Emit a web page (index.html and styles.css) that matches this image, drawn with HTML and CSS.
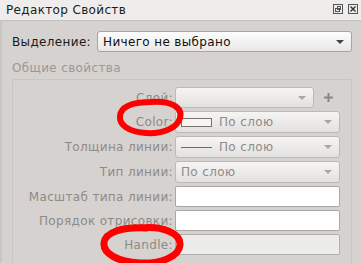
FILE: index.html
```html
<!DOCTYPE html>
<html lang="ru">
<head>
    <meta charset="UTF-8">
    <title>Редактор Свойств</title>
    <link rel="stylesheet" href="styles.css">
</head>
<body>
<div class="dock">
    <div class="titlebar">
        <span class="title">Редактор Свойств</span>
        <div class="title-buttons">
            <svg class="tb-icon" width="10" height="10" viewBox="0 0 10 10">
                <rect x="0.5" y="0.5" width="9" height="9" fill="none" stroke="#555"/>
                <rect x="2.5" y="4.5" width="4" height="3" fill="none" stroke="#555"/>
                <rect x="4.5" y="2.5" width="3" height="3" fill="none" stroke="#555"/>
            </svg>
            <svg class="tb-icon" width="10" height="10" viewBox="0 0 10 10">
                <rect x="0.5" y="0.5" width="9" height="9" fill="none" stroke="#555"/>
                <path d="M2.5 2.5 L7.5 7.5 M7.5 2.5 L2.5 7.5" stroke="#333" stroke-width="1.4"/>
            </svg>
        </div>
    </div>

    <div class="content">
        <div class="select-row">
            <span class="label-dark">Выделение:</span>
            <div class="combo combo-main">
                <span>Ничего не выбрано</span>
                <span class="arrow dark"></span>
            </div>
        </div>

        <div class="section-title">Общие свойства</div>

        <div class="group">
            <div class="prop-row">
                <span class="prop-label">Слой:</span>
                <div class="field-wrap">
                    <div class="combo combo-off short"><span></span><span class="arrow"></span></div>
                    <svg class="plus" width="11" height="11" viewBox="0 0 11 11">
                        <path d="M5.5 1 V10 M1 5.5 H10" stroke="#8a8683" stroke-width="2"/>
                    </svg>
                </div>
            </div>
            <div class="prop-row">
                <span class="prop-label">Color:</span>
                <div class="combo combo-off">
                    <span class="value"><span class="swatch"></span>По слою</span>
                    <span class="arrow"></span>
                </div>
            </div>
            <div class="prop-row">
                <span class="prop-label">Толщина линии:</span>
                <div class="combo combo-off">
                    <span class="value"><span class="line-sample"></span>По слою</span>
                    <span class="arrow"></span>
                </div>
            </div>
            <div class="prop-row">
                <span class="prop-label">Тип линии:</span>
                <div class="combo combo-off">
                    <span class="value">По слою</span>
                    <span class="arrow"></span>
                </div>
            </div>
            <div class="prop-row">
                <span class="prop-label">Масштаб типа линии:</span>
                <div class="edit"></div>
            </div>
            <div class="prop-row">
                <span class="prop-label">Порядок отрисовки:</span>
                <div class="edit"></div>
            </div>
            <div class="prop-row">
                <span class="prop-label">Handle:</span>
                <div class="edit readonly"></div>
            </div>
        </div>
    </div>

    <!-- red marks drawn over the screenshot -->
    <svg class="marks" width="361" height="263" viewBox="0 0 361 263">
        <path d="M150 102 C170 100 183 107 180 118 C177 129 161 134 146 133 C129 132 119 125 120 116 C121 106 134 102 152 102"
              fill="none" stroke="#ff0000" stroke-width="6" stroke-linecap="round"/>
        <path d="M142 228 C162 226 181 233 180 245 C179 257 160 264 140 263 C117 262 103 253 104 243 C105 232 122 227 146 228"
              fill="none" stroke="#ff0000" stroke-width="7" stroke-linecap="round"/>
    </svg>
</div>
</body>
</html>
```

FILE: styles.css
```css
/* property editor dock */
body {
    margin: 0;
    padding: 0;
    font-family: "DejaVu Sans", sans-serif;
    font-size: 12px;
    letter-spacing: 0.35px;
    background-color: #d6d2cf;
}

.dock {
    position: relative;
    width: 361px;
    height: 263px;
    overflow: hidden;
    background-color: #d6d2cf;
}

.titlebar {
    display: flex;
    align-items: center;
    justify-content: space-between;
    height: 20px;
    padding: 0 3px 0 6px;
    background-color: #efedeb;
    border-bottom: 1px solid #c4c0bd;
    color: #1c1c1c;
}

.title-buttons {
    display: flex;
    gap: 5px;
    margin-bottom: 2px;
}

.content {
    height: 242px;
    padding: 10px 9px 0 12px;
    box-sizing: border-box;
    box-shadow: inset 2px 0 0 #cac6c3;
}

.select-row {
    display: flex;
    align-items: center;
    gap: 6px;
}

.label-dark {
    color: #1a1a1a;
}

.combo {
    display: flex;
    align-items: center;
    justify-content: space-between;
    height: 21px;
    box-sizing: border-box;
    padding: 0 7px 0 5px;
    border-radius: 3px;
}

.combo-main {
    flex: 1;
    border: 1px solid #a8a4a1;
    background: linear-gradient(#fdfdfd, #eae8e6);
    color: #111;
}

.arrow {
    width: 0;
    height: 0;
    border-left: 4px solid transparent;
    border-right: 4px solid transparent;
    border-top: 4px solid #aaa6a3;
}

.arrow.dark {
    border-top-color: #444;
}

.section-title {
    margin-top: 9px;
    color: #9c9895;
}

.group {
    display: flex;
    flex-direction: column;
    gap: 3px;
    margin-top: 4px;
    height: 185px;
    box-sizing: border-box;
    padding: 7px 11px 0 0;
    border: 1px solid #c9c5c2;
    border-radius: 2px;
}

.prop-row {
    display: grid;
    grid-template-columns: 160px 1fr;
    column-gap: 2px;
    align-items: center;
}

.prop-label {
    text-align: right;
    color: #8e8a87;
}

.field-wrap {
    display: flex;
    align-items: center;
    gap: 9px;
}

.combo-off {
    height: 22px;
    border: 1px solid #bdb9b6;
    background: linear-gradient(#f6f5f4, #e3e1df);
    color: #8e8a87;
}

.combo-off.short {
    flex: 0 0 139px;
    height: 21px;
}

.value {
    display: flex;
    align-items: center;
}

.swatch {
    width: 29px;
    height: 7px;
    margin-right: 7px;
    border: 1px solid #777370;
    background-color: #f8f4f1;
}

.line-sample {
    width: 31px;
    height: 1px;
    margin-right: 7px;
    background-color: #6f6b68;
}

.edit {
    height: 21px;
    box-sizing: border-box;
    border: 1px solid #aaa6a3;
    border-radius: 2px;
    background-color: #ffffff;
}

.edit.readonly {
    background-color: #ececeb;
    border-color: #b2aeab;
}

.marks {
    position: absolute;
    top: 0;
    left: 0;
    pointer-events: none;
}
```
